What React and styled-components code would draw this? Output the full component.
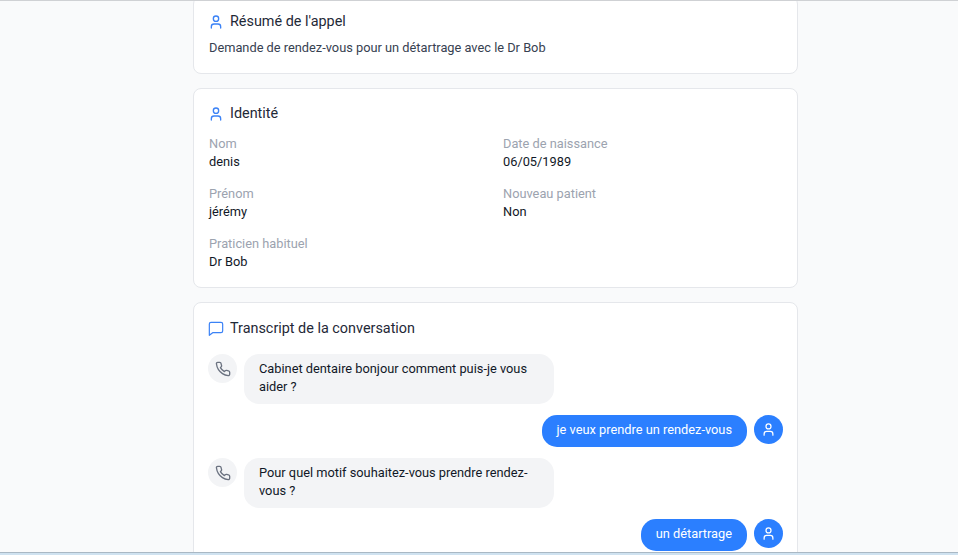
import React from "react";
import styled, { createGlobalStyle } from "styled-components";

const Global = createGlobalStyle`
  html, body { margin: 0; padding: 0; height: 100%; overflow: hidden; }
  body { font-family: Roboto, "Liberation Sans", sans-serif; }
`;

const Frame = styled.div`
  width: 958px; height: 555px; display: flex; flex-direction: column;
  overflow: hidden; background: #f9fafb;
`;
const TopRule = styled.div`flex: none; height: 1px; background: #cfd1d4;`;
const Viewport = styled.main`
  flex: 1; min-height: 0; overflow: hidden; display: flex; justify-content: flex-start; padding-left: 193px;
`;
const BottomStrip = styled.div`
  flex: none; height: 3px; background: #cfe2f0; border-top: 1px solid #a9b8c4; box-sizing: border-box;
`;
const Column = styled.div`
  width: 605px; margin-top: -5px; display: flex; flex-direction: column; gap: 14px; flex: none;
`;
const Card = styled.section`
  box-sizing: border-box; background: #fff; border: 1px solid #e5e7eb; border-radius: 8px;
  padding: ${(p) => p.$top || 15}px 15px 16px; display: flex; flex-direction: column; gap: ${(p) => p.$gap || 7}px;
`;
const CardTitle = styled.h2`
  margin: 0; display: flex; align-items: center; gap: 6px; height: 20px; margin-left: -1px;
  font-size: 14.4px; font-weight: 400; color: #1f2937; line-height: 20px;
`;
const IconSlot = styled.span`
  display: flex; width: 16px; height: 16px; color: #3b82f6; flex: none;
`;
const Summary = styled.p`
  margin: 0; font-size: 12.8px; line-height: 18px; color: #374151;
`;
const FieldGrid = styled.div`
  display: grid; grid-template-columns: 1fr 1fr; column-gap: 15px; row-gap: 14px; padding-top: 4px;
`;
const Field = styled.div`display: flex; flex-direction: column; gap: 0;`;
const FieldLabel = styled.span`font-size: 12.8px; line-height: 18px; color: #9ca3af;`;
const FieldValue = styled.span`font-size: 12.8px; line-height: 18px; color: #111827;`;
const Messages = styled.div`display: flex; flex-direction: column; gap: 11px; margin: 0 -1px;`;
const Row = styled.div`
  display: flex; gap: 7px; align-items: flex-start;
  justify-content: ${(p) => (p.$mine ? "flex-end" : "flex-start")};
`;
const Avatar = styled.span`
  width: 29px; height: 29px; border-radius: 50%; flex: none;
  display: flex; align-items: center; justify-content: center;
  background: ${(p) => (p.$mine ? "#2b7fff" : "#f3f4f6")};
  color: ${(p) => (p.$mine ? "#fff" : "#6b7280")};
`;
const Bubble = styled.div`
  box-sizing: border-box; max-width: 310px; padding: 6px 15px 8px; border-radius: 15px;
  font-size: 12.8px; line-height: 18px;
  background: ${(p) => (p.$mine ? "#2b7fff" : "#f3f4f6")};
  color: ${(p) => (p.$mine ? "#fff" : "#111827")};
  ${(p) => !p.$mine && "width: 310px;"}
`;

const User = ({ size = 16 }) => (
  <svg width={size} height={size} viewBox="0 0 24 24" fill="none" stroke="currentColor" strokeWidth="2" strokeLinecap="round" strokeLinejoin="round">
    <path d="M19 21v-2a4 4 0 0 0-4-4H9a4 4 0 0 0-4 4v2" />
    <circle cx="12" cy="7" r="4" />
  </svg>
);
const Chat = () => (
  <svg width="16" height="16" viewBox="0 0 24 24" fill="none" stroke="currentColor" strokeWidth="1.8" strokeLinecap="round" strokeLinejoin="round">
    <path d="M22 15a2.5 2.5 0 0 1-2.5 2.5H7L2 21.5V4.5A2.5 2.5 0 0 1 4.5 2h15A2.5 2.5 0 0 1 22 4.5z" />
  </svg>
);
const Phone = () => (
  <svg width="16" height="16" viewBox="0 0 24 24" fill="none" stroke="currentColor" strokeWidth="2" strokeLinecap="round" strokeLinejoin="round">
    <path d="M22 16.92v3a2 2 0 0 1-2.18 2 19.79 19.79 0 0 1-8.63-3.07 19.5 19.5 0 0 1-6-6 19.79 19.79 0 0 1-3.07-8.67A2 2 0 0 1 4.11 2h3a2 2 0 0 1 2 1.72 12.84 12.84 0 0 0 .7 2.81 2 2 0 0 1-.45 2.11L8.09 9.91a16 16 0 0 0 6 6l1.27-1.27a2 2 0 0 1 2.11-.45 12.84 12.84 0 0 0 2.81.7A2 2 0 0 1 22 16.92z" />
  </svg>
);

const fields = [
  ["Nom", "denis"],
  ["Date de naissance", "06/05/1989"],
  ["Prénom", "jérémy"],
  ["Nouveau patient", "Non"],
  ["Praticien habituel", "Dr Bob"],
];
const messages = [
  [false, "Cabinet dentaire bonjour comment puis-je vous aider ?"],
  [true, "je veux prendre un rendez-vous"],
  [false, "Pour quel motif souhaitez-vous prendre rendez-vous ?"],
  [true, "un détartrage"],
];

export default function App() {
  return (
    <Frame>
      <Global />
      <TopRule />
      <Viewport>
        <Column>
          <Card>
            <CardTitle><IconSlot><User /></IconSlot>Résumé de l'appel</CardTitle>
            <Summary>Demande de rendez-vous pour un détartrage avec le Dr Bob</Summary>
          </Card>
          <Card>
            <CardTitle><IconSlot><User /></IconSlot>Identité</CardTitle>
            <FieldGrid>
              {fields.map(([l, v]) => (
                <Field key={l}><FieldLabel>{l}</FieldLabel><FieldValue>{v}</FieldValue></Field>
              ))}
            </FieldGrid>
          </Card>
          <Card $top={16} $gap={15}>
            <CardTitle><IconSlot><Chat /></IconSlot>Transcript de la conversation</CardTitle>
            <Messages>
              {messages.map(([mine, t]) => (
                <Row key={t} $mine={mine}>
                  {!mine && <Avatar><Phone /></Avatar>}
                  <Bubble $mine={mine}>{t}</Bubble>
                  {mine && <Avatar $mine><User size={15} /></Avatar>}
                </Row>
              ))}
            </Messages>
          </Card>
        </Column>
      </Viewport>
      <BottomStrip />
    </Frame>
  );
}
